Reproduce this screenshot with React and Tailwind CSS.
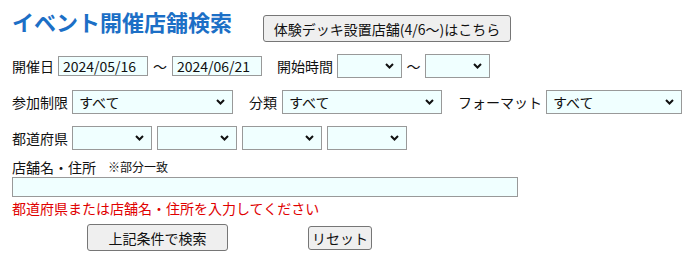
const Chevron = () => (
  <svg width="9" height="6" viewBox="0 0 9 6" className="pointer-events-none absolute right-[8px] top-1/2 -translate-y-1/2">
    <path d="M1 1l3.5 3.5L8 1" fill="none" stroke="#111" strokeWidth="2" />
  </svg>
);

const Select = ({ w, value = '' }) => (
  <div className={`relative h-[24px] shrink-0 ${w}`}>
    <select
      defaultValue={value}
      className="h-full w-full appearance-none border border-[#999] bg-[#f0ffff] pl-[6px] text-[14px] leading-none text-[#111] outline-none"
    >
      <option value={value}>{value}</option>
    </select>
    <Chevron />
  </div>
);

const App = () => {
  return (
    <div className="min-h-[265px] bg-white pl-3 font-['Noto_Sans_CJK_JP','Noto_Sans',sans-serif] text-[14px] text-[#111]">
      <div className="flex h-[54px] items-start pt-[6px]">
        <h1 className="text-[22px] font-bold leading-[30px] text-[#1c6fc6]">イベント開催店舗検索</h1>
        <button className="ml-[31px] mt-[9px] h-[27px] w-[248px] rounded-[3px] border border-[#767676] bg-[#efefef] text-[14px] leading-none text-[#111]">
          体験デッキ設置店舗(4/6〜)はこちら
        </button>
      </div>

      <div className="flex h-[24px] items-center whitespace-nowrap">
        <span className="w-[46px] shrink-0">開催日</span>
        <input
          defaultValue="2024/05/16"
          className="h-[20px] w-[90px] border border-[#999] bg-[#f0ffff] px-[4px] text-[14px] leading-none outline-none"
        />
        <span className="w-[24px] shrink-0 text-center">〜</span>
        <input
          defaultValue="2024/06/21"
          className="h-[20px] w-[90px] border border-[#999] bg-[#f0ffff] px-[4px] text-[14px] leading-none outline-none"
        />
        <span className="ml-[15px] w-[60px] shrink-0">開始時間</span>
        <Select w="w-[65px]" />
        <span className="w-[23px] shrink-0 text-center">〜</span>
        <Select w="w-[65px]" />
      </div>

      <div className="mt-[12px] flex h-[24px] items-center whitespace-nowrap">
        <span className="w-[60px] shrink-0">参加制限</span>
        <Select w="w-[161px]" value="すべて" />
        <span className="ml-[16px] w-[33px] shrink-0">分類</span>
        <Select w="w-[160px]" value="すべて" />
        <span className="ml-[16px] w-[88px] shrink-0">フォーマット</span>
        <Select w="w-[136px]" value="すべて" />
      </div>

      <div className="mt-[12px] flex h-[24px] items-center whitespace-nowrap">
        <span className="w-[60px] shrink-0">都道府県</span>
        <div className="flex gap-[5px]">
          <Select w="w-[80px]" />
          <Select w="w-[80px]" />
          <Select w="w-[80px]" />
          <Select w="w-[80px]" />
        </div>
      </div>

      <div className="mt-[8px] flex h-[18px] items-center whitespace-nowrap">
        <span>店舗名・住所</span>
        <span className="ml-[12px] text-[12px]">※部分一致</span>
      </div>
      <input className="mt-[1px] block h-[20px] w-[506px] border border-[#999] bg-[#f0ffff] px-[4px] outline-none" />

      <p className="mt-[1px] leading-[20px] text-[#e00000]">都道府県または店舗名・住所を入力してください</p>

      <div className="mt-[6px] flex h-[27px] items-center">
        <button className="ml-[75px] h-[27px] w-[141px] rounded-[3px] border border-[#767676] bg-[#efefef] text-[14px] leading-none text-[#111]">
          上記条件で検索
        </button>
        <button className="ml-[80px] h-[24px] w-[64px] rounded-[3px] border border-[#767676] bg-[#efefef] text-[14px] leading-none text-[#111]">
          リセット
        </button>
      </div>
    </div>
  );
};

export default App;
